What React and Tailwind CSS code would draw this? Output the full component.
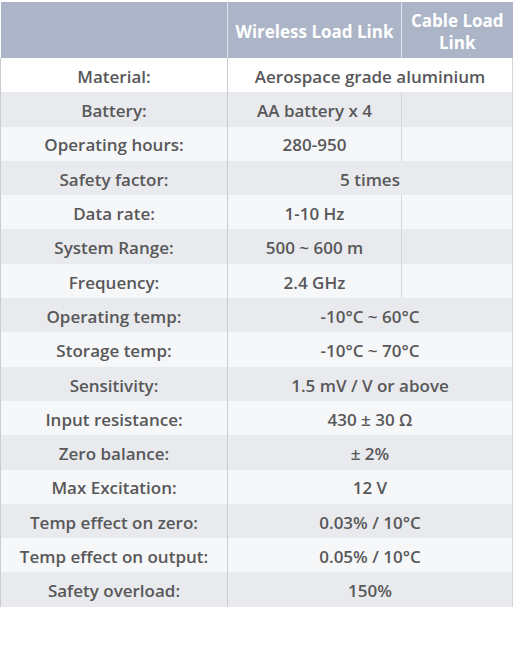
import React from "react";

const rows = [
  { label: "Material:", value: "Aerospace grade aluminium", merged: true },
  { label: "Battery:", value: "AA battery x 4" },
  { label: "Operating hours:", value: "280-950" },
  { label: "Safety factor:", value: "5 times", merged: true },
  { label: "Data rate:", value: "1-10 Hz" },
  { label: "System Range:", value: "500 ~ 600 m" },
  { label: "Frequency:", value: "2.4 GHz" },
  { label: "Operating temp:", value: "-10°C ~ 60°C", merged: true },
  { label: "Storage temp:", value: "-10°C ~ 70°C", merged: true },
  { label: "Sensitivity:", value: "1.5 mV / V or above", merged: true },
  { label: "Input resistance:", value: "430 ± 30 Ω", merged: true },
  { label: "Zero balance:", value: "± 2%", merged: true },
  { label: "Max Excitation:", value: "12 V", merged: true },
  { label: "Temp effect on zero:", value: "0.03% / 10°C", merged: true },
  { label: "Temp effect on output:", value: "0.05% / 10°C", merged: true },
  { label: "Safety overload:", value: "150%", merged: true },
];

export default function App() {
  return (
    <div className="w-[526px] h-[655px] bg-white pt-[2px] font-['Open_Sans','Liberation_Sans',sans-serif]">
      <table className="w-[512px] border-collapse table-fixed text-[17px] font-semibold text-[#58585a]">
        <colgroup>
          <col className="w-[227px]" />
          <col className="w-[174px]" />
          <col className="w-[111px]" />
        </colgroup>
        <thead>
          <tr className="h-[56px] bg-[#abb5c7] text-white">
            <th className="border-r border-[#dfe3ea]"></th>
            <th className="border-r border-[#dfe3ea] font-bold text-center leading-[22px] pt-1">Wireless Load Link</th>
            <th className="font-bold text-center leading-[22px] px-1 pt-1">Cable Load Link</th>
          </tr>
        </thead>
        <tbody>
          {rows.map((r, i) => (
            <tr
              key={r.label}
              className={
                "h-[34.3px] " +
                (i === 0 ? "bg-white" : i % 2 === 1 ? "bg-[#e9eaed]" : "bg-[#f6f7f8]")
              }
            >
              <td className="border-l border-r border-[#c9ccd1] text-center p-0 pt-[3px]">{r.label}</td>
              {r.merged ? (
                <td colSpan={2} className="border-r border-[#d4d7dc] text-center p-0 pt-[3px]">{r.value}</td>
              ) : (
                <>
                  <td className="border-r border-[#d4d7dc] text-center p-0 pt-[3px]">{r.value}</td>
                  <td className="border-r border-[#d4d7dc] p-0"></td>
                </>
              )}
            </tr>
          ))}
        </tbody>
      </table>
    </div>
  );
}
